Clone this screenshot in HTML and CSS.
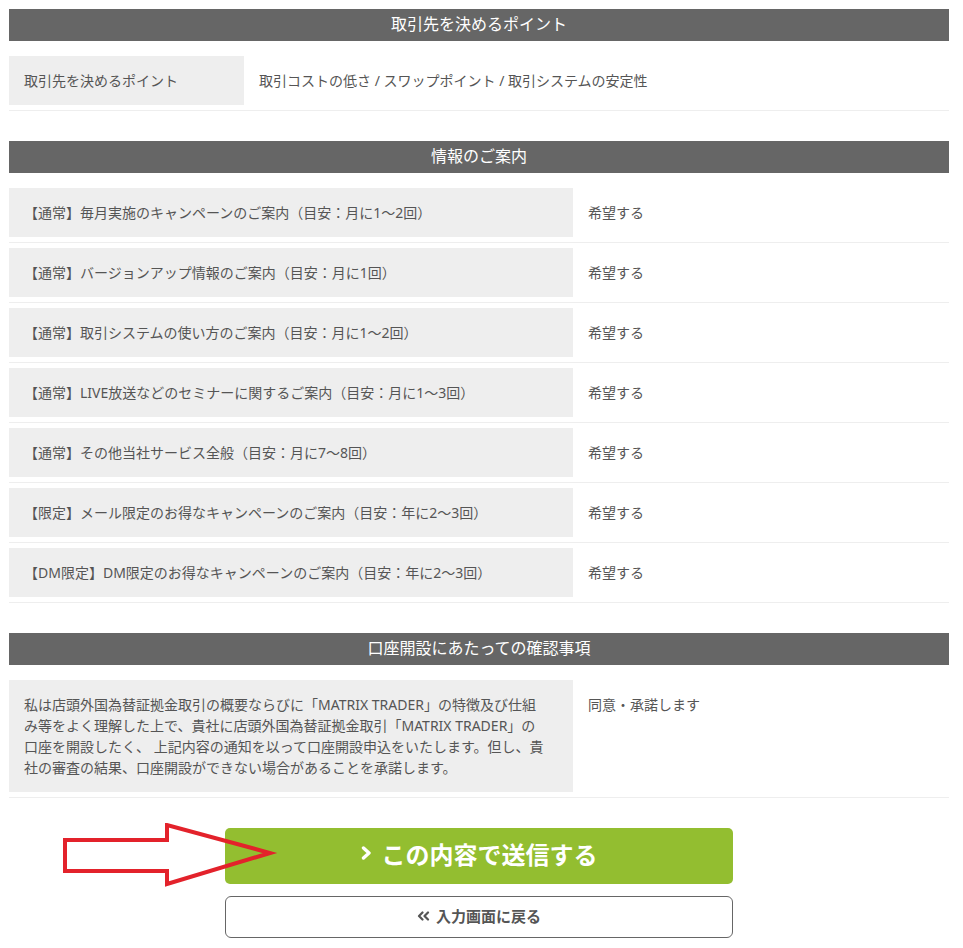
FILE: index.html
```html
<!DOCTYPE html>
<html lang="ja">
<head>
    <meta charset="UTF-8">
    <meta name="viewport" content="width=device-width, initial-scale=1.0">
    <title>入力内容の確認</title>
    <link rel="stylesheet" href="styles.css">
</head>
<body>
    <main class="wrapper">
        <!-- 取引先を決めるポイント -->
        <section class="confirm-section">
            <h2 class="section-title">取引先を決めるポイント</h2>
            <div class="confirm-row narrow">
                <div class="row-label">取引先を決めるポイント</div>
                <div class="row-value">取引コストの低さ / スワップポイント / 取引システムの安定性</div>
            </div>
        </section>

        <!-- 情報のご案内 -->
        <section class="confirm-section">
            <h2 class="section-title">情報のご案内</h2>
            <div class="confirm-row">
                <div class="row-label">【通常】毎月実施のキャンペーンのご案内（目安：月に1～2回）</div>
                <div class="row-value">希望する</div>
            </div>
            <div class="confirm-row">
                <div class="row-label">【通常】バージョンアップ情報のご案内（目安：月に1回）</div>
                <div class="row-value">希望する</div>
            </div>
            <div class="confirm-row">
                <div class="row-label">【通常】取引システムの使い方のご案内（目安：月に1～2回）</div>
                <div class="row-value">希望する</div>
            </div>
            <div class="confirm-row">
                <div class="row-label">【通常】LIVE放送などのセミナーに関するご案内（目安：月に1～3回）</div>
                <div class="row-value">希望する</div>
            </div>
            <div class="confirm-row">
                <div class="row-label">【通常】その他当社サービス全般（目安：月に7～8回）</div>
                <div class="row-value">希望する</div>
            </div>
            <div class="confirm-row">
                <div class="row-label">【限定】メール限定のお得なキャンペーンのご案内（目安：年に2～3回）</div>
                <div class="row-value">希望する</div>
            </div>
            <div class="confirm-row">
                <div class="row-label">【DM限定】DM限定のお得なキャンペーンのご案内（目安：年に2～3回）</div>
                <div class="row-value">希望する</div>
            </div>
        </section>

        <!-- 確認事項 -->
        <section class="confirm-section">
            <h2 class="section-title">口座開設にあたっての確認事項</h2>
            <div class="confirm-row">
                <div class="row-label long-text">私は店頭外国為替証拠金取引の概要ならびに「MATRIX TRADER」の特徴及び仕組み等をよく理解した上で、貴社に店頭外国為替証拠金取引「MATRIX TRADER」の口座を開設したく、 上記内容の通知を以って口座開設申込をいたします。但し、貴社の審査の結果、口座開設ができない場合があることを承諾します。</div>
                <div class="row-value">同意・承諾します</div>
            </div>
        </section>

        <!-- ボタン -->
        <div class="btn-area">
            <button class="btn-submit" type="button">
                <svg class="icon-next" width="11" height="14" viewBox="0 0 11 14"><polyline points="2.5,2 8,7 2.5,12" fill="none" stroke="#fff" stroke-width="3.4" stroke-linecap="round" stroke-linejoin="round"/></svg>
                この内容で送信する
            </button>
            <button class="btn-back" type="button">
                <svg class="icon-back" width="13" height="10" viewBox="0 0 13 10"><polyline points="5.5,1.5 2,5 5.5,8.5" fill="none" stroke="#555" stroke-width="2.2" stroke-linecap="round" stroke-linejoin="round"/><polyline points="11,1.5 7.5,5 11,8.5" fill="none" stroke="#555" stroke-width="2.2" stroke-linecap="round" stroke-linejoin="round"/></svg>
                入力画面に戻る
            </button>

            <!-- 注目用の矢印 -->
            <svg class="pointer-arrow" width="220" height="70" viewBox="0 0 220 70">
                <polygon points="5,17 107,17 107,2 210,30 107,61 107,48 5,48" fill="none" stroke="#e3222b" stroke-width="4" stroke-linejoin="miter"/>
            </svg>
        </div>
    </main>
</body>
</html>
```

FILE: styles.css
```css
:root {
    --text-main: #555555;
    --bg-label: #eeeeee;
    --bg-title: #666666;
    --line: #eeeeee;
    --green: #93be30;
}

body {
    margin: 0;
    padding: 0;
    background: #ffffff;
    color: var(--text-main);
    font-family: "Noto Sans", "Noto Sans CJK JP", sans-serif;
    font-size: 14px;
    line-height: 21px;
}

.wrapper {
    width: 940px;
    padding: 9px 14px 0 9px;
}

/* セクション */
.confirm-section {
    margin-bottom: 30px;
}

.section-title {
    margin: 0 0 10px;
    height: 32px;
    line-height: 30px;
    background: var(--bg-title);
    color: #ffffff;
    font-size: 16px;
    font-weight: normal;
    text-align: center;
}

.confirm-row {
    display: flex;
    align-items: stretch;
    padding: 5px 0;
    border-bottom: 1px solid var(--line);
}

.row-label {
    flex: 0 0 60%;
    box-sizing: border-box;
    padding: 14px 15px;
    background: var(--bg-label);
}

.row-label.long-text {
    padding-right: 29px;
}

.confirm-row.narrow .row-label {
    flex-basis: 25%;
}

.row-value {
    flex: 1;
    padding: 14px 15px;
}

/* ボタン */
.btn-area {
    position: relative;
    display: flex;
    flex-direction: column;
    align-items: center;
    gap: 12px;
    padding-bottom: 10px;
}

.btn-submit,
.btn-back {
    display: flex;
    align-items: center;
    justify-content: center;
    width: 508px;
    font-family: inherit;
    font-weight: bold;
    cursor: pointer;
}

.btn-submit {
    height: 56px;
    background: var(--green);
    color: #ffffff;
    border: none;
    border-radius: 5px;
    font-size: 24px;
    gap: 10px;
    padding: 0 0 6px;
}

.btn-back {
    height: 42px;
    background: #ffffff;
    color: var(--text-main);
    border: 1px solid #666666;
    border-radius: 6px;
    font-size: 15px;
    gap: 6px;
    padding: 0 0 3px;
}

.pointer-arrow {
    position: absolute;
    left: 51px;
    top: -5px;
}
```
